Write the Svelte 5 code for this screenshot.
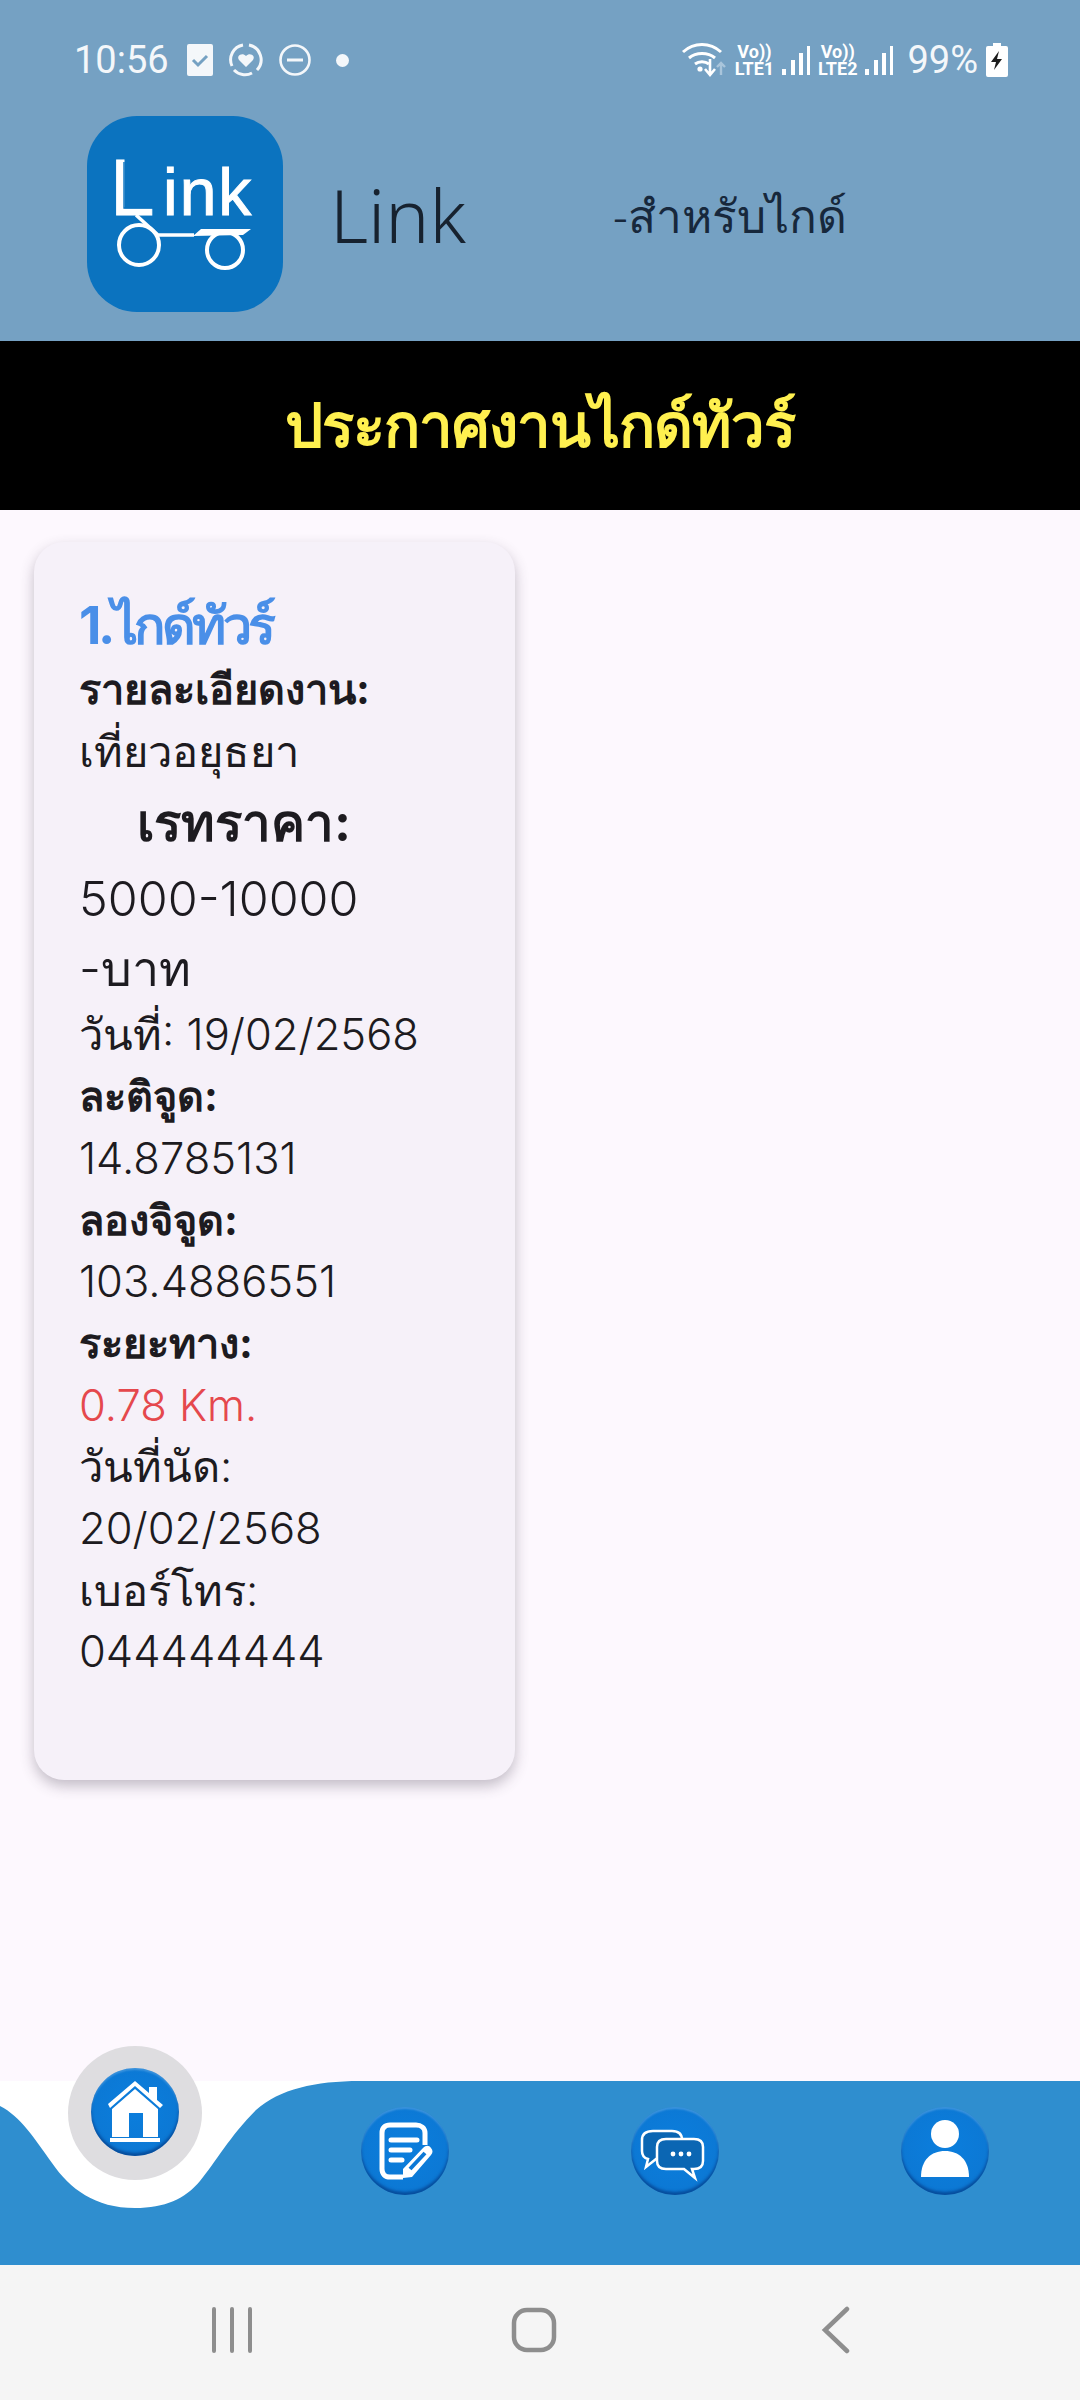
<script>
    const rows = [
        { text: '1.ไกด์ทัวร์', kind: 'title' },
        { text: 'รายละเอียดงาน:', kind: 'label' },
        { text: 'เที่ยวอยุธยา', kind: 'value' },
        { text: 'เรทราคา:', kind: 'rate' },
        { text: '5000-10000', kind: 'big' },
        { text: '-บาท', kind: 'big' },
        { text: 'วันที่: 19/02/2568', kind: 'value' },
        { text: 'ละติจูด:', kind: 'label' },
        { text: '14.8785131', kind: 'value' },
        { text: 'ลองจิจูด:', kind: 'label' },
        { text: '103.4886551', kind: 'value' },
        { text: 'ระยะทาง:', kind: 'label' },
        { text: '0.78 Km.', kind: 'dist' },
        { text: 'วันที่นัด:', kind: 'value' },
        { text: '20/02/2568', kind: 'value' },
        { text: 'เบอร์โทร:', kind: 'value' },
        { text: '044444444', kind: 'value' }
    ];
</script>

<div class="page">
    <header class="top">
        <div class="status">
            <div class="status-left">
                <span class="time">10:56</span>
                <svg width="28" height="34" viewBox="0 0 28 34"><rect x="1" y="1" width="26" height="32" rx="2" fill="#f4f7fa"/><path d="M7 17l5 5 9-9" fill="none" stroke="#75a1c3" stroke-width="3"/></svg>
                <svg width="36" height="36" viewBox="0 0 36 36"><path d="M21 3a15 15 0 0 1 8 25M24 31a15 15 0 0 1-18-3M4 24A15 15 0 0 1 15 3" fill="none" stroke="#f4f7fa" stroke-width="3"/><path d="M18 25l-7-7c-3-4 3-8 7-4 4-4 10 0 7 4z" fill="#f4f7fa"/></svg>
                <svg width="34" height="34" viewBox="0 0 34 34"><circle cx="17" cy="17" r="14.5" fill="none" stroke="#f4f7fa" stroke-width="2.6"/><rect x="9" y="15.5" width="16" height="3" fill="#f4f7fa"/></svg>
                <span class="dot"></span>
            </div>
            <div class="status-right">
                <svg width="46" height="36" viewBox="0 0 46 36"><path d="M2 10c11-10 27-10 38 0M8 16c7-6 19-6 26 0M14 22c4-3 10-3 14 0" fill="none" stroke="#fff" stroke-width="3"/><circle cx="19" cy="27" r="2.6" fill="#fff"/><path d="M29 17v15M24 27l5 6 5-6" fill="none" stroke="#fff" stroke-width="2.6"/><path d="M40 33V21M36 25l4-4 4 4" fill="none" stroke="#a9c5db" stroke-width="2.4"/></svg>
                <span class="volte"><b>Vo))</b><b>LTE1</b></span>
                <svg class="bars" width="28" height="30" viewBox="0 0 28 30"><path d="M0 24h4v6H0zM9 15h4v15H9zM17 8h4v22h-4zM25 1h3v29h-3z" fill="#fff"/></svg>
                <span class="volte"><b>Vo))</b><b>LTE2</b></span>
                <svg class="bars" width="28" height="30" viewBox="0 0 28 30"><path d="M0 24h4v6H0zM9 15h4v15H9zM17 8h4v22h-4zM25 1h3v29h-3z" fill="#fff"/></svg>
                <span class="battery-text">99%</span>
                <svg width="22" height="34" viewBox="0 0 22 34"><path d="M7 0h8v3h5a2 2 0 0 1 2 2v27a2 2 0 0 1-2 2H2a2 2 0 0 1-2-2V5a2 2 0 0 1 2-2h5z" fill="#fff"/><path d="M13 8L5 19h5l-2 8 8-11h-5z" fill="#1c1c1c"/></svg>
            </div>
        </div>
        <div class="brand">
            <svg class="logo" width="196" height="196" viewBox="0 0 196 196">
                <rect width="196" height="196" rx="50" fill="#0b73bf"/>
                <text x="23" y="99" class="logo-l">L</text>
                <text x="76" y="99" class="logo-ink">ink</text>
                <path d="M37 46v46h31" fill="none" stroke="#0b73bf" stroke-width="1.4"/>
                <circle cx="52" cy="129" r="20" fill="none" stroke="#fff" stroke-width="4"/>
                <circle cx="138" cy="134" r="18" fill="none" stroke="#fff" stroke-width="4"/>
                <path d="M49 99l22 20h36" fill="none" stroke="#fff" stroke-width="3.5"/>
                <path d="M106 120l8-7h50l-8 6z" fill="#fff"/>
            </svg>
            <span class="app-name">Link</span>
            <span class="subtitle">-สำหรับไกด์</span>
        </div>
    </header>

    <div class="banner">ประกาศงานไกด์ทัวร์</div>

    <main class="content">
        <article class="card">
            {#each rows as row}
                <p class={row.kind}>{row.text}</p>
            {/each}
        </article>
    </main>

    <footer class="tabbar">
        <svg class="wave" width="360" height="130" viewBox="0 0 360 130">
            <path d="M0 25C20 35 35 58 52 82C70 108 95 127 135 127C165 127 185 118 200 100C215 82 230 55 256 29C280 8 315 0 360 0L0 0Z" fill="#fff"/>
        </svg>
        <div class="halo"></div>
        <div class="tab raised">
            <svg viewBox="0 0 90 90" width="90" height="90">
                <path d="M18 37L45 14l14 12v-6h8v13l6 5-3 3-25-22-25 22z" fill="#fff"/>
                <path d="M22 42L45 22l23 20v28H53V46H39v24H22z" fill="#fff"/>
                <rect x="20" y="71" width="50" height="4" fill="#fff"/>
            </svg>
        </div>
        <div class="tab">
            <svg viewBox="0 0 90 90" width="90" height="90">
                <path d="M43 71H30c-5 0-8-3-8-8V27c0-5 3-8 8-8h26c5 0 9 3 9 8v12" fill="none" stroke="#fff" stroke-width="5"/>
                <path d="M31 34h26M31 44h19M31 54h11" fill="none" stroke="#fff" stroke-width="5" stroke-linecap="round"/>
                <path d="M43 72v-9l20-21c3-3 6-3 8 0 2 2 2 5 0 7L52 71z" fill="#fff"/>
                <path d="M50 63l15-16" stroke="#0b78d6" stroke-width="4"/>
            </svg>
        </div>
        <div class="tab">
            <svg viewBox="0 0 90 90" width="90" height="90">
                <path d="M18 53l-2 8 10-8h10c6 0 16-4 16-10V34c0-6-4-9-10-9H23c-7 0-11 3-11 9v11c0 4 2 7 6 8z" fill="#0b66b3" stroke="#fff" stroke-width="2.5"/>
                <path d="M36 33h28c6 0 9 3 9 8v14c0 5-3 8-9 8h-2l3 9-11-9H36c-6 0-9-3-9-8V41c0-5 3-8 9-8z" fill="#0b66b3" stroke="#fff" stroke-width="2.5"/>
                <circle cx="43" cy="48" r="2.4" fill="#fff"/><circle cx="51" cy="48" r="2.4" fill="#fff"/><circle cx="59" cy="48" r="2.4" fill="#fff"/>
            </svg>
        </div>
        <div class="tab">
            <svg viewBox="0 0 90 90" width="90" height="90">
                <circle cx="45" cy="28" r="14" fill="#fff"/>
                <path d="M21 71c0-17 10-26 24-26s24 9 24 26z" fill="#fff"/>
            </svg>
        </div>
    </footer>

    <nav class="sysnav">
        <svg width="44" height="46" viewBox="0 0 44 46"><path d="M4 2v42M22 2v42M40 2v42" stroke="#8e8e8e" stroke-width="4" stroke-linecap="round"/></svg>
        <svg width="46" height="46" viewBox="0 0 46 46"><rect x="3" y="3" width="40" height="40" rx="13" fill="none" stroke="#8e8e8e" stroke-width="4.5"/></svg>
        <svg width="30" height="48" viewBox="0 0 30 48"><path d="M26 3L4 24l22 21" fill="none" stroke="#8e8e8e" stroke-width="4.5" stroke-linecap="round"/></svg>
    </nav>
</div>

<style>
    :global(body) {
        margin: 0;
        background: #fdf8fe;
    }

    .page {
        width: 1080px;
        height: 2400px;
        display: flex;
        flex-direction: column;
        font-family: Inter, "Noto Sans", sans-serif;
    }

    .top {
        height: 341px;
        background: #75a1c3;
        box-sizing: border-box;
        padding-top: 40px;
    }

    .status {
        display: flex;
        justify-content: space-between;
        align-items: center;
        height: 40px;
        padding: 0 72px 0 74px;
        color: #f4f7fa;
        font-family: Roboto, sans-serif;
    }

    .status-left,
    .status-right {
        display: flex;
        align-items: center;
    }

    .status-left {
        gap: 14px;
    }

    .status-right {
        gap: 8px;
    }

    .time {
        font-size: 38px;
        margin-right: 3px;
    }

    .dot {
        width: 13px;
        height: 13px;
        border-radius: 50%;
        background: #f4f7fa;
        margin-left: 10px;
    }

    .volte {
        display: flex;
        flex-direction: column;
        align-items: center;
        font-size: 18px;
        line-height: 17px;
        color: #fff;
    }

    .battery-text {
        font-size: 38px;
        margin-left: 6px;
    }

    .brand {
        display: flex;
        align-items: center;
        margin-top: 36px;
        padding-left: 87px;
    }

    .logo {
        flex: none;
    }

    .logo-l {
        font: 400 80px "Liberation Sans", sans-serif;
        fill: #fff;
        stroke: #fff;
        stroke-width: 0.8px;
    }

    .logo-ink {
        font: 400 66px "Liberation Sans", sans-serif;
        letter-spacing: 2px;
        fill: #fff;
        stroke: #fff;
        stroke-width: 1px;
    }

    .app-name {
        font-family: "Noto Sans", sans-serif;
        font-size: 74px;
        font-weight: 300;
        color: #17222f;
        margin-left: 47px;
        width: 283px;
    }

    .subtitle {
        font-family: "Noto Sans", sans-serif;
        font-size: 46px;
        font-weight: 300;
        color: #17283c;
        margin-top: 5px;
    }

    .banner {
        height: 169px;
        background: #000;
        color: #fff04f;
        font-size: 60px;
        letter-spacing: -1px;
        font-weight: 700;
        display: flex;
        align-items: center;
        justify-content: center;
    }

    .content {
        flex: 1;
        background: #fdf8fe;
        padding: 32px 34px 0;
    }

    .card {
        width: 481px;
        height: 1238px;
        box-sizing: border-box;
        padding: 50px 20px 0 45px;
        background: #f6f1f9;
        border-radius: 30px;
        box-shadow: 0 6px 14px rgba(60, 50, 70, 0.3);
    }

    .card p {
        margin: 0;
        color: #1d1b20;
        font-size: 43.5px;
        line-height: 61.7px;
        font-weight: 300;
        white-space: nowrap;
    }

    .card .title {
        color: #4a8fe8;
        font-size: 52px;
        letter-spacing: -3.5px;
        line-height: 67px;
        font-weight: 700;
    }

    .card .label {
        font-size: 41.5px;
        font-weight: 700;
    }

    .card .rate {
        font-size: 51px;
        font-weight: 700;
        line-height: 82px;
        padding-left: 58px;
    }

    .card .big {
        font-size: 48.5px;
        line-height: 70px;
    }

    .card .dist {
        color: #e5484d;
    }

    .tabbar {
        position: relative;
        height: 184px;
        background: #2f8ecf;
        display: grid;
        grid-template-columns: repeat(4, 270px);
        padding-top: 26px;
        box-sizing: border-box;
    }

    .wave {
        position: absolute;
        left: 0;
        top: 0;
    }

    .halo {
        position: absolute;
        left: 68px;
        top: -35px;
        width: 134px;
        height: 134px;
        border-radius: 50%;
        background: #dedde0;
    }

    .tab {
        position: relative;
        justify-self: center;
        width: 88px;
        height: 88px;
        border-radius: 50%;
        background: radial-gradient(circle at 50% 45%, #0b7edd 0%, #0c78d4 72%, #2f86d2 90%, #0a5aac 100%);
        box-shadow: inset 0 -3px 3px rgba(0, 40, 110, 0.55), inset 0 2px 2px rgba(255, 255, 255, 0.2);
    }

    .tab svg {
        display: block;
        margin: -1px;
    }

    .raised {
        top: -39px;
    }

    .sysnav {
        height: 135px;
        box-sizing: border-box;
        padding-bottom: 5px;
        background: #f5f5f5;
        display: grid;
        grid-template-columns: repeat(3, 302px);
        justify-items: center;
        align-items: center;
        padding-left: 81px;
    }

    .sysnav svg {
        display: block;
    }
</style>
